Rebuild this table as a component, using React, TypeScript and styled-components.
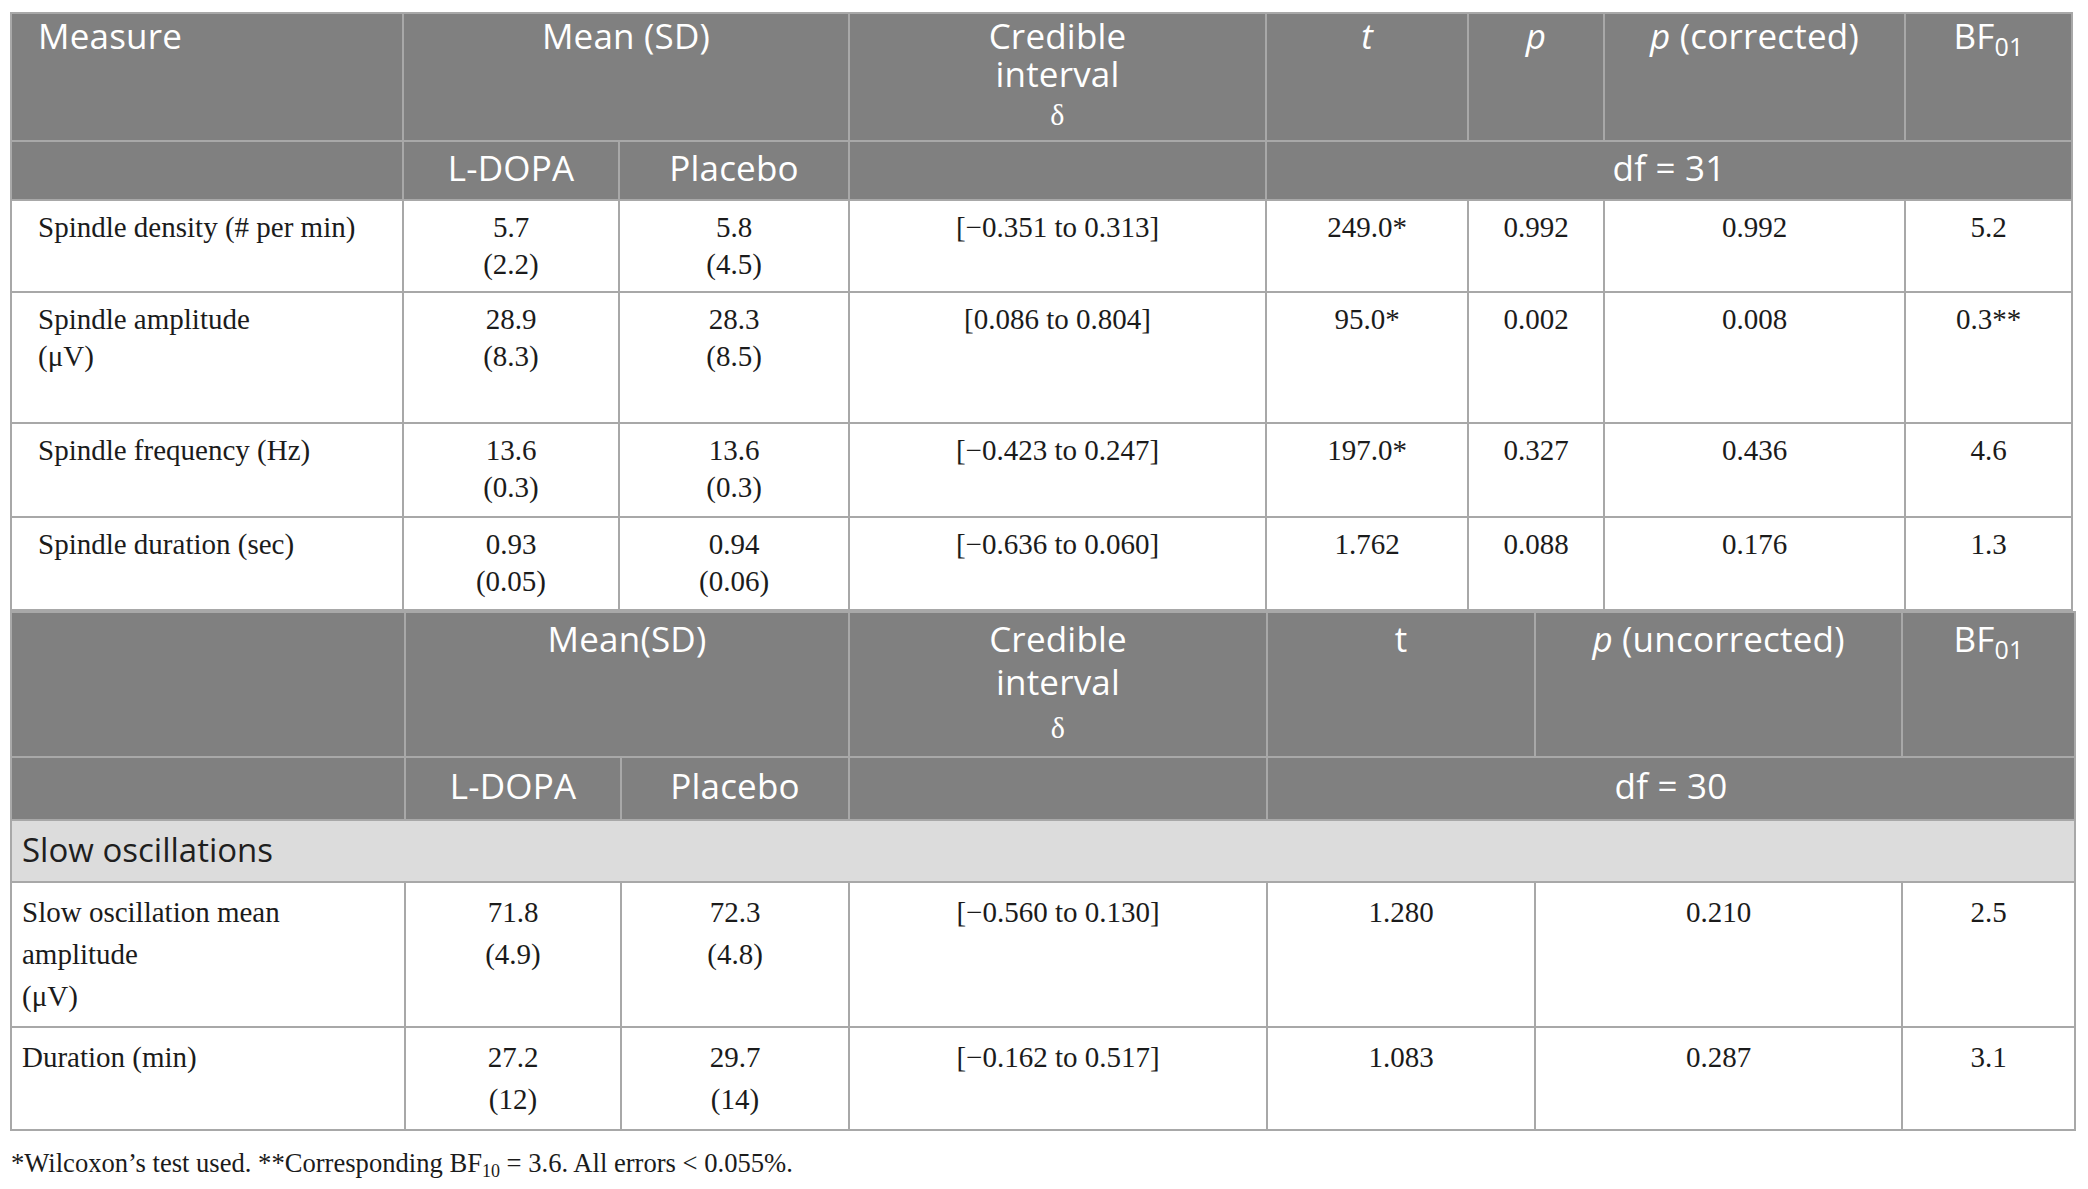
import React from "react";
import styled, { createGlobalStyle } from "styled-components";

const GlobalStyle = createGlobalStyle`
  html, body {
    margin: 0;
    padding: 0;
    background: #ffffff;
  }
`;

type Row = {
  measure: string[];
  ldopa: string[];
  placebo: string[];
  ci: string;
  stats: string[];
  h: number;
};

const spindleRows: Row[] = [
  {
    measure: ["Spindle density (# per min)"],
    ldopa: ["5.7", "(2.2)"],
    placebo: ["5.8", "(4.5)"],
    ci: "[−0.351 to 0.313]",
    stats: ["249.0*", "0.992", "0.992", "5.2"],
    h: 92,
  },
  {
    measure: ["Spindle amplitude", "(μV)"],
    ldopa: ["28.9", "(8.3)"],
    placebo: ["28.3", "(8.5)"],
    ci: "[0.086 to 0.804]",
    stats: ["95.0*", "0.002", "0.008", "0.3**"],
    h: 131,
  },
  {
    measure: ["Spindle frequency (Hz)"],
    ldopa: ["13.6", "(0.3)"],
    placebo: ["13.6", "(0.3)"],
    ci: "[−0.423 to 0.247]",
    stats: ["197.0*", "0.327", "0.436", "4.6"],
    h: 94,
  },
  {
    measure: ["Spindle duration (sec)"],
    ldopa: ["0.93", "(0.05)"],
    placebo: ["0.94", "(0.06)"],
    ci: "[−0.636 to 0.060]",
    stats: ["1.762", "0.088", "0.176", "1.3"],
    h: 93,
  },
];

const slowRows: Row[] = [
  {
    measure: ["Slow oscillation mean", "amplitude", "(μV)"],
    ldopa: ["71.8", "(4.9)"],
    placebo: ["72.3", "(4.8)"],
    ci: "[−0.560 to 0.130]",
    stats: ["1.280", "0.210", "2.5"],
    h: 145,
  },
  {
    measure: ["Duration (min)"],
    ldopa: ["27.2", "(12)"],
    placebo: ["29.7", "(14)"],
    ci: "[−0.162 to 0.517]",
    stats: ["1.083", "0.287", "3.1"],
    h: 103,
  },
];

const Lines: React.FC<{ lines: string[] }> = ({ lines }) => (
  <>
    {lines.map((l, i) => (
      <React.Fragment key={i}>
        {i > 0 && <br />}
        {l}
      </React.Fragment>
    ))}
  </>
);

const App: React.FC = () => {
  return (
    <Page>
      <GlobalStyle />
      <StatsTable $w={2061} $lh={37} $headLh={38} $pad={26}>
        <colgroup>
          {[392, 216, 230, 417, 202, 136, 301, 167].map((w, i) => (
            <Col key={i} $w={w} />
          ))}
        </colgroup>
        <thead>
          <HeadRow $h={128}>
            <HeadCell $left $top={3}>Measure</HeadCell>
            <HeadCell colSpan={2} $top={3}>Mean (SD)</HeadCell>
            <HeadCell $top={3}>
              Credible
              <br />
              interval
              <br />
              <Delta>δ</Delta>
            </HeadCell>
            <HeadCell $top={3}>
              <i>t</i>
            </HeadCell>
            <HeadCell $top={3}>
              <i>p</i>
            </HeadCell>
            <HeadCell $top={3}>
              <i>p</i> (corrected)
            </HeadCell>
            <HeadCell $top={3}>
              BF<Sub>01</Sub>
            </HeadCell>
          </HeadRow>
          <HeadRow $h={59}>
            <SubHeadCell />
            <SubHeadCell>L-DOPA</SubHeadCell>
            <SubHeadCell>Placebo</SubHeadCell>
            <SubHeadCell />
            <SubHeadCell colSpan={4}>df = 31</SubHeadCell>
          </HeadRow>
        </thead>
        <tbody>
          {spindleRows.map((r, i) => (
            <BodyRow key={i} $h={r.h}>
              <DataCell $left>
                <Lines lines={r.measure} />
              </DataCell>
              <DataCell>
                <Lines lines={r.ldopa} />
              </DataCell>
              <DataCell>
                <Lines lines={r.placebo} />
              </DataCell>
              <DataCell>{r.ci}</DataCell>
              {r.stats.map((s, j) => (
                <DataCell key={j}>{s}</DataCell>
              ))}
            </BodyRow>
          ))}
        </tbody>
      </StatsTable>

      <StatsTable $w={2064} $lh={42} $headLh={43} $pad={10}>
        <colgroup>
          {[394, 216, 228, 418, 268, 367, 173].map((w, i) => (
            <Col key={i} $w={w} />
          ))}
        </colgroup>
        <thead>
          <HeadRow $h={145}>
            <HeadCell $top={4} />
            <HeadCell colSpan={2} $top={4}>Mean(SD)</HeadCell>
            <HeadCell $top={4}>
              Credible
              <br />
              interval
              <br />
              <Delta>δ</Delta>
            </HeadCell>
            <HeadCell $top={4}>t</HeadCell>
            <HeadCell $top={4}>
              <i>p</i> (uncorrected)
            </HeadCell>
            <HeadCell $top={4}>
              BF<Sub>01</Sub>
            </HeadCell>
          </HeadRow>
          <HeadRow $h={63}>
            <SubHeadCell />
            <SubHeadCell>L-DOPA</SubHeadCell>
            <SubHeadCell>Placebo</SubHeadCell>
            <SubHeadCell />
            <SubHeadCell colSpan={3}>df = 30</SubHeadCell>
          </HeadRow>
        </thead>
        <tbody>
          <BodyRow $h={62}>
            <SectionCell colSpan={7}>Slow oscillations</SectionCell>
          </BodyRow>
          {slowRows.map((r, i) => (
            <BodyRow key={i} $h={r.h}>
              <DataCell $left>
                <Lines lines={r.measure} />
              </DataCell>
              <DataCell>
                <Lines lines={r.ldopa} />
              </DataCell>
              <DataCell>
                <Lines lines={r.placebo} />
              </DataCell>
              <DataCell>{r.ci}</DataCell>
              {r.stats.map((s, j) => (
                <DataCell key={j}>{s}</DataCell>
              ))}
            </BodyRow>
          ))}
        </tbody>
      </StatsTable>

      <Footnote>
        *Wilcoxon’s test used. **Corresponding BF<FootSub>10</FootSub> = 3.6. All errors &lt; 0.055%.
      </Footnote>
    </Page>
  );
};

const Page = styled.div`
  padding: 12px 0 0 10px;
  font-family: "Liberation Serif", "Times New Roman", serif;
  color: #1b1b1b;
`;

const StatsTable = styled.table<{ $w: number; $lh: number; $headLh: number; $pad: number }>`
  width: ${p => p.$w}px;
  table-layout: fixed;
  border-collapse: collapse;
  border: 2px solid #a8a8a8;

  td {
    line-height: ${p => p.$lh}px;
  }
  th {
    line-height: ${p => p.$headLh}px;
  }
  td:first-child,
  th:first-child {
    padding-left: ${p => p.$pad}px;
  }
`;

const Col = styled.col<{ $w: number }>`
  width: ${p => p.$w}px;
`;

const HeadRow = styled.tr<{ $h: number }>`
  height: ${p => p.$h}px;
  background: #808080;
`;

const BodyRow = styled.tr<{ $h: number }>`
  height: ${p => p.$h}px;
`;

const HeadCell = styled.th<{ $left?: boolean; $top: number }>`
  border: 2px solid #a8a8a8;
  padding: ${p => p.$top}px 8px 0;
  vertical-align: top;
  text-align: ${p => (p.$left ? "left" : "center")};
  font-family: "Open Sans", "Noto Sans", sans-serif;
  font-size: 35px;
  font-weight: 400;
  letter-spacing: 0.2px;
  color: #ffffff;
  white-space: nowrap;
`;

const SubHeadCell = styled.th`
  border: 2px solid #a8a8a8;
  padding: 0 8px 6px;
  vertical-align: middle;
  text-align: center;
  font-family: "Open Sans", "Noto Sans", sans-serif;
  font-size: 35px;
  font-weight: 400;
  letter-spacing: 0.2px;
  color: #ffffff;
`;

const DataCell = styled.td<{ $left?: boolean }>`
  border: 2px solid #a8a8a8;
  padding: 8px 10px 0;
  vertical-align: top;
  text-align: ${p => (p.$left ? "left" : "center")};
  font-size: 29px;
  white-space: nowrap;
`;

const SectionCell = styled.td`
  border: 2px solid #a8a8a8;
  background: #dcdcdc;
  padding: 0 10px 2px;
  vertical-align: middle;
  font-family: "Open Sans", "Noto Sans", sans-serif;
  font-size: 33px;
  font-weight: 400;
  color: #1f1f1f;
  line-height: 40px !important;
`;

const Delta = styled.span`
  font-family: "Liberation Serif", "DejaVu Serif", serif;
  font-size: 30px;
`;

const Sub = styled.sub`
  font-size: 25px;
  vertical-align: -7px;
  line-height: 0;
`;

const Footnote = styled.p`
  margin: 17px 0 0 1px;
  font-size: 26.6px;
  line-height: 30px;
`;

const FootSub = styled.sub`
  font-size: 18px;
  vertical-align: -5px;
  line-height: 0;
`;

export default App;
